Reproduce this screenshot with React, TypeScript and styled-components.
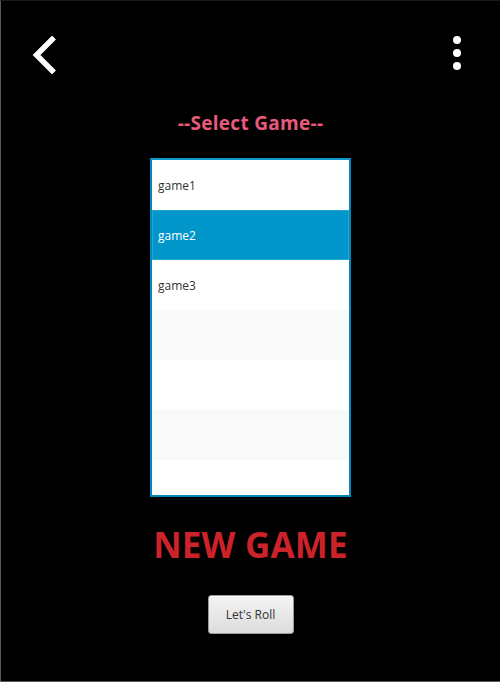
import React from "react";
import styled, { createGlobalStyle } from "styled-components";

const Global = createGlobalStyle`
  html, body { margin: 0; padding: 0; background: #000; }
  body { font-family: "Open Sans", "Noto Sans", sans-serif; }
`;

const Screen = styled.div`
  width: 500px;
  height: 682px;
  box-sizing: border-box;
  background: #000;
  border-left: 1px solid #5a5a5a;
  border-bottom: 1px solid #5a5a5a;
  border-top: 1px solid #1a1a1a;
  display: flex;
  flex-direction: column;
  align-items: center;
`;

const TopBar = styled.div`
  width: 100%;
  height: 108px;
  box-sizing: border-box;
  display: flex;
  justify-content: space-between;
  align-items: flex-start;
  padding: 18px 33px 0 8px;
`;

const IconButton = styled.button`
  width: 72px;
  height: 72px;
  border-radius: 50%;
  border: none;
  background: #010101;
  display: flex;
  align-items: center;
  justify-content: center;
  padding: 0;
  cursor: pointer;
`;

const MenuButton = styled.button`
  width: 20px;
  height: 72px;
  border: none;
  background: transparent;
  display: flex;
  flex-direction: column;
  align-items: center;
  justify-content: center;
  gap: 5px;
  padding: 0;
  margin-top: -2px;
`;

const Dot = styled.span`
  width: 8px;
  height: 8px;
  border-radius: 50%;
  background: #fff;
`;

const Title = styled.h2`
  margin: 0;
  font-size: 19px;
  font-weight: 700;
  color: #e85a7b;
  line-height: 28px;
  letter-spacing: 0.3px;
`;

const List = styled.div`
  margin-top: 21px;
  width: 201px;
  height: 339px;
  box-sizing: border-box;
  border: 2px solid #0088b8;
  border-top-color: #1098c8;
  background: #fff;
  overflow: hidden;
  display: flex;
  flex-direction: column;
`;

const Row = styled.div<{ $selected?: boolean; $alt?: boolean }>`
  flex: 0 0 50px;
  height: 50px;
  box-sizing: border-box;
  display: flex;
  align-items: center;
  padding-left: ${(p) => (p.$selected ? "5px" : "6px")};
  font-size: 12px;
  color: ${(p) => (p.$selected ? "#fff" : "#333")};
  background: ${(p) => (p.$selected ? "#0096c9" : p.$alt ? "#f9f9f9" : "#fff")};
  border: ${(p) => (p.$selected ? "1px solid #22a8d4" : "none")};
`;

const Heading = styled.h1`
  margin: 26px 0 0;
  font-size: 35px;
  font-weight: 700;
  color: #cc2229;
  line-height: 44px;
  letter-spacing: 0.2px;
`;

const RollButton = styled.button`
  margin-top: 28px;
  width: 86px;
  height: 39px;
  border: 1px solid #9a9a9a;
  border-radius: 3px;
  background: linear-gradient(#f4f4f4, #dcdcdc);
  box-shadow: inset 0 1px 0 #fff;
  font-family: "Open Sans", "Noto Sans", sans-serif;
  font-size: 12px;
  color: #333;
  cursor: pointer;
`;

const games = ["game1", "game2", "game3", "", "", "", ""];

export default function App() {
  return (
    <>
      <Global />
      <Screen>
        <TopBar>
          <IconButton aria-label="back">
            <svg width="28" height="38" viewBox="0 0 28 38">
              <path d="M23 1.5 L5.5 19 L23 36.5" stroke="#fff" strokeWidth="5.5" fill="none" strokeLinecap="butt" strokeLinejoin="miter" />
            </svg>
          </IconButton>
          <MenuButton aria-label="menu">
            <Dot />
            <Dot />
            <Dot />
          </MenuButton>
        </TopBar>
        <Title>--Select Game--</Title>
        <List>
          {games.map((g, i) => (
            <Row key={i} $selected={i === 1} $alt={i % 2 === 1}>
              {g}
            </Row>
          ))}
        </List>
        <Heading>NEW GAME</Heading>
        <RollButton>Let's Roll</RollButton>
      </Screen>
    </>
  );
}
